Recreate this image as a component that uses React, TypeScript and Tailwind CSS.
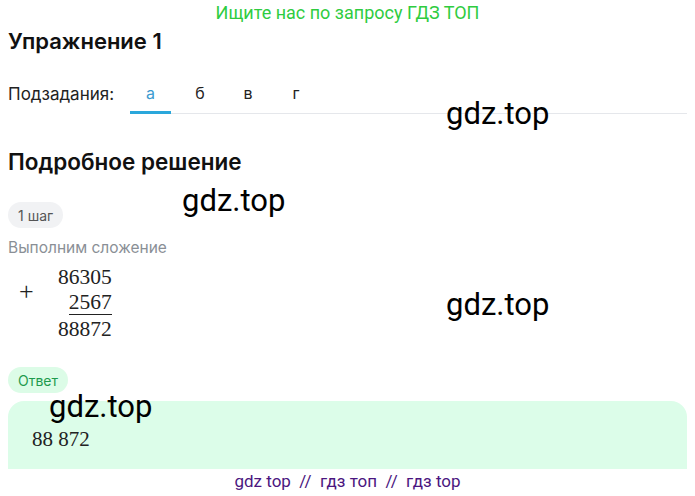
import React from "react";

const Mark = ({ className }: { className: string }) => (
  <div
    className={`absolute text-[31px] leading-none text-black ${className}`}
    style={{ fontFamily: "Roboto, Arial, sans-serif" }}
  >
    gdz.top
  </div>
);

export default function App() {
  const sans = { fontFamily: "Inter, 'Noto Sans', sans-serif" };
  const serif = { fontFamily: "'Liberation Serif', 'DejaVu Serif', serif" };
  return (
    <div className="relative w-[695px] h-[496px] bg-white overflow-hidden" style={sans}>
      <div
        className="h-[24px] flex items-center justify-center text-[18px] text-[#2fcc3f]"
        style={{ fontFamily: "Roboto, Arial, sans-serif" }}
      >
        Ищите нас по запросу ГДЗ ТОП
      </div>
      <div className="px-2">
        <h1 className="mt-[3px] text-[22px] leading-[28px] font-semibold text-[#111]">Упражнение 1</h1>
        <div className="mt-[28px] flex items-end">
          <div className="text-[17px] leading-[20px] pb-[10px] text-[#222] w-[122px]">Подзадания:</div>
          <div className="flex flex-1 items-end border-b border-[#e5e7eb]">
            <div className="w-[41px] text-center text-[16px] leading-[20px] pb-[8px] text-[#3a9bd0] border-b-[3px] border-[#2aa7db] -mb-px">
              а
            </div>
            <div className="w-[58px] text-center text-[16px] leading-[20px] pb-[10px] text-[#222]">б</div>
            <div className="w-[38px] text-center text-[16px] leading-[20px] pb-[10px] text-[#222]">в</div>
            <div className="w-[58px] text-center text-[16px] leading-[20px] pb-[10px] text-[#222]">г</div>
          </div>
        </div>
        <h2 className="mt-[35px] text-[22.5px] leading-[26px] font-semibold text-[#111]">Подробное решение</h2>
        <div className="mt-[27px] inline-flex items-center h-[26px] px-[10px] rounded-full bg-[#f1f2f4] text-[14px] text-[#555]">
          1 шаг
        </div>
        <div className="mt-[10px] text-[15.5px] leading-[20px] text-[#8a8f96]">Выполним сложение</div>
        <div className="mt-[6px] flex items-start text-[21.5px] text-[#222]" style={serif}>
          <div className="w-[50px] pl-[11px] mt-[15px] text-[26px] leading-[26px]">+</div>
          <div className="flex flex-col items-end leading-[26px]">
            <div>86305</div>
            <div className="border-b border-[#222] leading-[24px]">2567</div>
            <div className="leading-[28px]">88872</div>
          </div>
        </div>
        <div className="mt-[24px] inline-flex items-center h-[26px] px-[10px] rounded-full bg-[#dcfce7] text-[14px] text-[#1f9a4d]">
          Ответ
        </div>
        <div className="mt-[8px] h-[68px] rounded-t-[16px] bg-[#dcfde9] flex items-center pl-[24px] pt-[10px] text-[21px] text-[#222]" style={serif}>
          88 872
        </div>
      </div>
      <div
        className="h-[25px] flex items-center justify-center text-[17px] text-[#4b1680]"
        style={{ fontFamily: "Roboto, Arial, sans-serif" }}
      >
        gdz top&nbsp;&nbsp;//&nbsp;&nbsp;гдз топ&nbsp;&nbsp;//&nbsp;&nbsp;гдз top
      </div>
      <Mark className="left-[446px] top-[98px]" />
      <Mark className="left-[182px] top-[185px]" />
      <Mark className="left-[446px] top-[289px]" />
      <Mark className="left-[49px] top-[391px]" />
    </div>
  );
}
